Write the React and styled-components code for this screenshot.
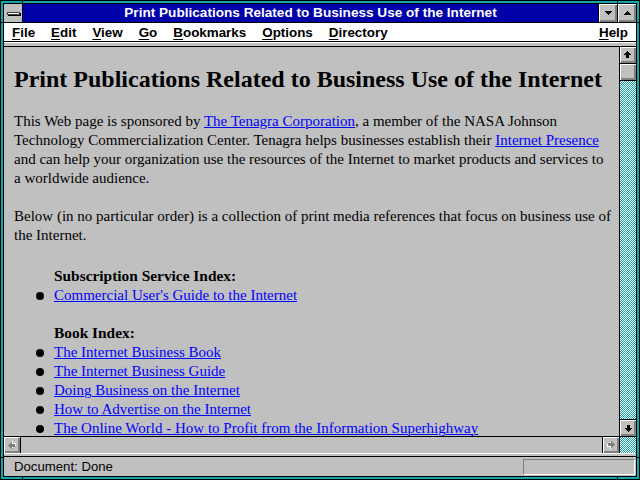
import React from "react";
import styled, { createGlobalStyle } from "styled-components";

const TEAL = "#10a8a8";
const FACE = "#c0c0c0";
const SHADOW = "#808080";

const GlobalStyle = createGlobalStyle`
  html, body { margin: 0; padding: 0; background: ${FACE}; }
  body { width: 640px; height: 480px; overflow: hidden; }
`;

const Frame = styled.div`
  position: relative;
  width: 640px;
  height: 480px;
  box-sizing: border-box;
  background: ${TEAL};
  border: 1px solid #000;
  padding: 2px;
`;

// little black ticks in the sizing border, near each corner
const Notch = styled.span`
  position: absolute;
  background: #000;
  ${(p) => (p.$vertical ? "width: 1px; height: 3px;" : "width: 3px; height: 1px;")}
  ${(p) => p.$css}
`;

const Inner = styled.div`
  height: 100%;
  box-sizing: border-box;
  border: 1px solid #000;
  display: flex;
  flex-direction: column;
  background: ${FACE};
`;

const TitleBar = styled.div`
  display: flex;
  height: 18px;
  border-bottom: 1px solid #000;
  flex-shrink: 0;
`;

const SysButton = styled.div`
  width: 18px;
  border-right: 1px solid #000;
  background: ${FACE};
  display: flex;
  align-items: center;
  justify-content: center;
`;

const SysBar = styled.span`
  width: 11px;
  height: 1px;
  background: #fff;
  border: 1px solid #404040;
  box-shadow: 1px 1px 0 #000;
`;

const Title = styled.div`
  flex: 1;
  background: #0000a8;
  color: #fff;
  font: bold 13.6px "Liberation Sans", Arial, sans-serif;
  line-height: 18px;
  text-align: center;
  white-space: nowrap;
  overflow: hidden;
`;

const TitleButton = styled.div`
  width: 18px;
  border-left: 1px solid #000;
  background: ${FACE};
  box-shadow: inset 1px 1px 0 #fff, inset -1px -1px 0 ${SHADOW}, inset -2px -2px 0 ${SHADOW};
  display: flex;
  align-items: center;
  justify-content: center;
`;

const MenuBar = styled.div`
  display: flex;
  align-items: center;
  height: 18px;
  background: #fff;
  border-bottom: 1px solid #000;
  flex-shrink: 0;
  font: bold 13.4px "Liberation Sans", Arial, sans-serif;
  color: #000;
`;

const MenuItem = styled.span`
  padding: 0 8px;
  margin-left: ${(p) => (p.$right ? "auto" : "0")};
  u { text-decoration-thickness: 1px; text-underline-offset: 2px; }
`;

const Rule = styled.div`
  height: ${(p) => p.$h}px;
  background: ${FACE};
  border-top: 1px solid #fff;
  border-bottom: 1px solid #000;
  flex-shrink: 0;
`;

const Main = styled.div`
  flex: 1;
  display: flex;
  min-height: 0;
`;

const Viewport = styled.div`
  flex: 1;
  display: flex;
  flex-direction: column;
  min-width: 0;
`;

const Page = styled.div`
  flex: 1;
  overflow: hidden;
  padding: 18px 10px 0 10px;
  font: 15px "Liberation Serif", "Times New Roman", serif;
  line-height: 19px;
  color: #000;
`;

const Heading = styled.h1`
  margin: 0 0 19px;
  font-size: 24px;
  font-weight: bold;
  line-height: 28px;
  white-space: nowrap;
`;

const Para = styled.p`
  margin: 0 0 ${(p) => p.$space || 19}px;
  white-space: nowrap;
`;

const Link = styled.a`
  color: #0000ff;
  text-decoration: underline;
  text-decoration-thickness: 1px;
`;

const Section = styled.div`
  padding-left: 40px;
  margin-bottom: 18px;
`;

const SectionTitle = styled.div`
  font-weight: bold;
  font-size: 15.4px;
  line-height: 20px;
`;

const List = styled.ul`
  list-style: none;
  margin: 0;
  padding: 0;
`;

const Item = styled.li`
  display: flex;
  align-items: center;
  white-space: nowrap;
`;

const Bullet = styled.span`
  flex-shrink: 0;
  width: 8px;
  height: 8px;
  border-radius: 50%;
  background: #000;
  margin-left: -18px;
  margin-right: 10px;
`;

const HScroll = styled.div`
  display: flex;
  height: 16px;
  border-top: 1px solid #000;
  flex-shrink: 0;
`;

const VScroll = styled.div`
  width: 16px;
  border-left: 1px solid #000;
  display: flex;
  flex-direction: column;
`;

const ScrollButton = styled.div`
  width: 16px;
  height: 16px;
  flex-shrink: 0;
  box-sizing: content-box;
  background: ${FACE};
  box-shadow: inset 1px 1px 0 #fff, inset -1px -1px 0 ${SHADOW}, inset -2px -2px 0 ${SHADOW};
  display: flex;
  align-items: center;
  justify-content: center;
  border-color: #000;
  border-style: solid;
  border-width: ${(p) => p.$edges || "0"};
`;

const Track = styled.div`
  flex: ${(p) => (p.$fixed ? `0 0 ${p.$fixed}px` : "1")};
  background-color: ${(p) => (p.$plain ? FACE : "#fff")};
  background-image: ${(p) =>
    p.$plain
      ? "none"
      : `conic-gradient(#fff 25%, ${TEAL} 0 50%, #fff 0 75%, ${TEAL} 0)`};
  background-size: 2px 2px;
`;

const StatusBar = styled.div`
  display: flex;
  height: 19px;
  flex-shrink: 0;
  padding-left: 10px;
  align-items: center;
  font: 13.2px "Liberation Sans", Arial, sans-serif;
  color: #000;
`;

const StatusBox = styled.div`
  margin-left: auto;
  margin-right: 1px;
  align-self: flex-start;
  margin-top: 2px;
  width: 110px;
  height: 14px;
  border-top: 1px solid ${SHADOW};
  border-left: 1px solid ${SHADOW};
  border-bottom: 1px solid #fff;
  border-right: 1px solid #fff;
`;

// pixel arrow, drawn pointing up then rotated
function Arrow({ dir = "up", disabled }) {
  const rot = { up: 0, right: 90, down: 180, left: 270 }[dir];
  const shape = (dx, dy, fill) => (
    <g fill={fill} transform={`translate(${dx} ${dy})`}>
      <rect x="3" y="0" width="1" height="1" />
      <rect x="2" y="1" width="3" height="1" />
      <rect x="1" y="2" width="5" height="1" />
      <rect x="0" y="3" width="7" height="1" />
      <rect x="2" y="4" width="3" height="3" />
    </g>
  );
  return (
    <svg width="8" height="8" viewBox="0 0 8 8" shapeRendering="crispEdges"
      style={{ transform: `rotate(${rot}deg)` }}>
      {disabled && shape(1, 1, "#fff")}
      {shape(0, 0, disabled ? SHADOW : "#000")}
    </svg>
  );
}

function Triangle({ up }) {
  return (
    <svg width="7" height="4" viewBox="0 0 7 4" shapeRendering="crispEdges">
      <polygon points={up ? "3.5,0 7,4 0,4" : "0,0 7,0 3.5,4"} fill="#000" />
    </svg>
  );
}

const menus = ["File", "Edit", "View", "Go", "Bookmarks", "Options", "Directory"];

const books = [
  "The Internet Business Book",
  "The Internet Business Guide",
  "Doing Business on the Internet",
  "How to Advertise on the Internet",
  "The Online World - How to Profit from the Information Superhighway",
];

export default function App() {
  return (
    <>
      <GlobalStyle />
      <Frame>
        <Notch $vertical $css="left: 21px; top: 0;" />
        <Notch $vertical $css="right: 21px; top: 0;" />
        <Notch $vertical $css="left: 21px; bottom: 0;" />
        <Notch $vertical $css="right: 21px; bottom: 0;" />
        <Notch $css="left: 0; top: 21px;" />
        <Notch $css="right: 0; top: 21px;" />
        <Notch $css="left: 0; bottom: 21px;" />
        <Notch $css="right: 0; bottom: 21px;" />
        <Inner>
          <TitleBar>
            <SysButton>
              <SysBar />
            </SysButton>
            <Title>Print Publications Related to Business Use of the Internet</Title>
            <TitleButton>
              <Triangle />
            </TitleButton>
            <TitleButton>
              <Triangle up />
            </TitleButton>
          </TitleBar>
          <MenuBar>
            {menus.map((m) => (
              <MenuItem key={m}>
                <u>{m[0]}</u>
                {m.slice(1)}
              </MenuItem>
            ))}
            <MenuItem $right>
              <u>H</u>elp
            </MenuItem>
          </MenuBar>
          <Rule $h={3} />
          <Main>
            <Viewport>
              <Page>
                <Heading>Print Publications Related to Business Use of the Internet</Heading>
                <Para>
                  This Web page is sponsored by <Link href="#">The Tenagra Corporation</Link>, a
                  member of the NASA Johnson
                  <br />
                  Technology Commercialization Center. Tenagra helps businesses establish their{" "}
                  <Link href="#">Internet Presence</Link>
                  <br />
                  and can help your organization use the resources of the Internet to market
                  products and services to
                  <br />a worldwide audience.
                </Para>
                <Para $space={21}>
                  Below (in no particular order) is a collection of print media references that
                  focus on business use of
                  <br />
                  the Internet.
                </Para>
                <Section>
                  <SectionTitle>Subscription Service Index:</SectionTitle>
                  <List>
                    <Item>
                      <Bullet />
                      <Link href="#">Commercial User's Guide to the Internet</Link>
                    </Item>
                  </List>
                </Section>
                <Section>
                  <SectionTitle>Book Index:</SectionTitle>
                  <List>
                    {books.map((b) => (
                      <Item key={b}>
                        <Bullet />
                        <Link href="#">{b}</Link>
                      </Item>
                    ))}
                  </List>
                </Section>
              </Page>
              <HScroll>
                <ScrollButton $edges="0 1px 0 0">
                  <Arrow dir="left" disabled />
                </ScrollButton>
                <Track $plain />
                <ScrollButton $edges="0 0 0 1px">
                  <Arrow dir="right" disabled />
                </ScrollButton>
              </HScroll>
            </Viewport>
            <VScroll>
              <ScrollButton $edges="0 0 1px 0">
                <Arrow dir="up" />
              </ScrollButton>
              <ScrollButton $edges="0 0 1px 0" />
              <Track />
              <ScrollButton $edges="1px 0 1px 0">
                <Arrow dir="down" />
              </ScrollButton>
              <Track $fixed={16} />
            </VScroll>
          </Main>
          <Rule $h={2} />
          <StatusBar>
            Document: Done
            <StatusBox />
          </StatusBar>
        </Inner>
      </Frame>
    </>
  );
}
